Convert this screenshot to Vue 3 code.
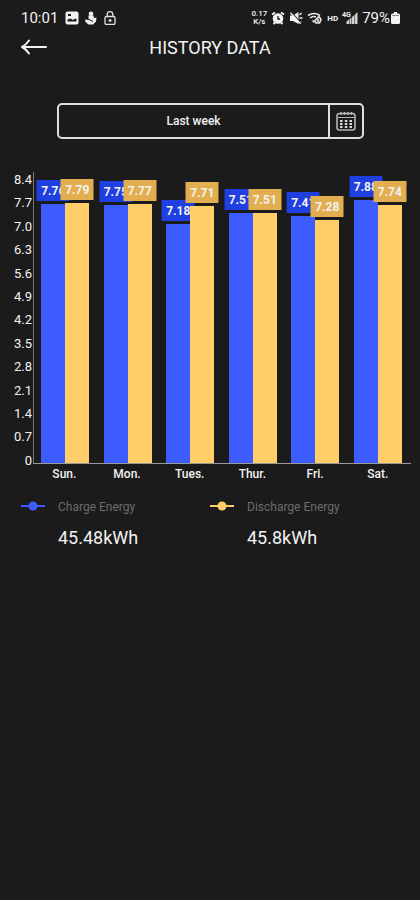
<template>
  <div class="page">
    <div class="status-bar">
      <div class="status-left">
        <span class="time">10:01</span>
        <svg class="icon" viewBox="0 0 14 14">
          <path fill="#f2f2f2" fill-rule="evenodd" d="M2.500.5h9a2 2 0 0 1 2 2v9a2 2 0 0 1-2 2h-9a2 2 0 0 1-2-2v-9a2 2 0 0 1 2-2zM2.500 10.500h9V8L10 7.500l-2 1.500-2.500-1.500-3 1zM3 3v2h3V3z" />
        </svg>
        <svg class="icon" viewBox="0 0 14 14">
          <circle cx="7" cy="2.800" r="2.300" fill="#f2f2f2" />
          <path d="M4.500 4.500h5L10 7l2.500-.5-.5 4-3 3H4.500L1.500 11 1 8.500 4.500 9z" fill="#f2f2f2" />
          <path d="M4 8l5 2.500" stroke="#1b1b1b" />
        </svg>
        <svg class="icon" viewBox="0 0 14 14" fill="none" stroke="#e2e2e2" stroke-width="1.300">
          <rect x="2" y="5.500" width="10" height="8" rx="1.500" />
          <path d="M4.200 5.500V3.500a2.800 2.800 0 0 1 5.600 0v2M7 8v3M5.500 9.500h3" />
        </svg>
      </div>
      <div class="status-right">
        <span class="speed"><span>0.17</span><span>K/s</span></span>
        <svg class="icon" viewBox="0 0 14 14">
          <path d="M1 3.500L4 1.500M13 3.500l-3-2M2.500 13l2-2M11.500 13l-2-2" stroke="#f2f2f2" stroke-width="2" />
          <circle cx="7" cy="7.500" r="5.300" fill="#f2f2f2" />
          <path d="M7 5v3h2" fill="none" stroke="#1b1b1b" stroke-width="1.300" />
        </svg>
        <svg class="icon" viewBox="0 0 14 14">
          <path d="M1 4.500h3L9.500 1v12L4 10H1z" fill="#f2f2f2" />
          <path d="M10.500 4l2-2M10.500 7h3M10.500 10l2 2" stroke="#f2f2f2" stroke-width="1.400" />
          <path d="M2.500 1.500l10 11" stroke="#1b1b1b" stroke-width="1.200" />
          <path d="M1.500 1.800l10 11" stroke="#f2f2f2" stroke-width="1.400" />
        </svg>
        <svg class="icon wide" viewBox="0 0 16 14" fill="none" stroke="#e8e8e8" stroke-width="1.600">
          <path d="M1 4.500q6-4 12 0M3 7q3-2.500 6-1M5.500 9.500l2 2" />
          <path d="M8 9.500l4-4 2 3-1.500 3.500H9zM11 8v3" />
        </svg>
        <span class="hd">HD</span>
        <svg class="icon wide signal" viewBox="0 0 16 14">
          <path d="M4.500 13v-2.500l2.500-2V13zM7.500 13V8l2-1.500V13zM10 13V6l2.500-2v9zM13 13V3.500L15.500 1v12z" fill="#d0d0d0" />
          <text x="0" y="6" font-size="7" font-weight="700" fill="#f2f2f2">4G</text>
        </svg>
        <span class="percent">79%</span>
        <svg class="battery" viewBox="0 0 9 14">
          <path d="M3 1h3v1.500h1.500q1.500 0 1.500 1.500v7.500Q9 13 7.500 13h-6Q0 13 0 11.500V4q0-1.500 1.500-1.500H3z" fill="#f2f2f2" />
          <path d="M1 4.500h7" stroke="#8a8a8a" />
        </svg>
      </div>
    </div>

    <header class="header">
      <button class="back" type="button" aria-label="Back">
        <svg viewBox="0 0 26 16" fill="none" stroke="#f2f2f2" stroke-width="2" stroke-linecap="round" stroke-linejoin="round">
          <path d="M25 8H1M8 1.500Q5 6 1 8q4 2 7 6.500" />
        </svg>
      </button>
      <h1>HISTORY DATA</h1>
    </header>

    <div class="picker">
      <button class="range" type="button">Last week</button>
      <button class="calendar" type="button" aria-label="Choose date">
        <svg viewBox="0 0 20 20" fill="none" stroke="#b4b4b4">
          <rect x="1" y="2.500" width="18" height="16.500" rx="2.500" stroke-width="1.600" />
          <path d="M1.500 6.500h17" />
          <path d="M5 1v3M8.500 1v3M12 1v3M15.500 1v3" stroke-width="1.600" />
          <path d="M4 10h2.500M8.800 10h2.500M13.500 10H16M4 13h2.500M8.800 13h2.500M13.500 13H16M4 16h2.500M8.800 16h2.500M13.500 16H16" stroke="#dcdcdc" stroke-width="1.800" />
        </svg>
      </button>
    </div>

    <div class="chart">
      <div class="y-axis">
        <span v-for="tick in ticks" :key="tick">{{ tick }}</span>
      </div>
      <div class="main">
        <div class="plot">
          <div v-for="d in days" :key="d.name" class="group">
            <div class="bar charge" :style="{ height: barHeight(d.charge) }">
              <span class="tag">{{ d.charge.toFixed(2) }}</span>
            </div>
            <div class="bar discharge" :style="{ height: barHeight(d.discharge) }">
              <span class="tag">{{ d.discharge.toFixed(2) }}</span>
            </div>
          </div>
        </div>
        <div class="x-axis">
          <span v-for="d in days" :key="d.name">{{ d.name }}</span>
        </div>
      </div>
    </div>

    <div class="legend">
      <div v-for="item in totals" :key="item.label" class="legend-item" :class="item.type">
        <svg class="marker" viewBox="0 0 24 10">
          <path d="M0 5h24" stroke="currentColor" stroke-width="2" />
          <circle cx="12" cy="5" r="4.500" fill="currentColor" />
        </svg>
        <div>
          <div class="label">{{ item.label }}</div>
          <div class="value">{{ item.value }}kWh</div>
        </div>
      </div>
    </div>
  </div>
</template>

<script setup>
import { ref } from 'vue'

const max = 8.4
const ticks = ['8.4', '7.7', '7.0', '6.3', '5.6', '4.9', '4.2', '3.5', '2.8', '2.1', '1.4', '0.7', '0']

const days = ref([
  { name: 'Sun.', charge: 7.76, discharge: 7.79 },
  { name: 'Mon.', charge: 7.75, discharge: 7.77 },
  { name: 'Tues.', charge: 7.18, discharge: 7.71 },
  { name: 'Thur.', charge: 7.51, discharge: 7.51 },
  { name: 'Fri.', charge: 7.41, discharge: 7.28 },
  { name: 'Sat.', charge: 7.88, discharge: 7.74 }
])

const totals = ref([
  { type: 'charge', label: 'Charge Energy', value: 45.48 },
  { type: 'discharge', label: 'Discharge Energy', value: 45.8 }
])

const barHeight = (value) => (value / max) * 100 + '%'
</script>

<style>
body {
  margin: 0;
  background: #1b1b1b;
}
</style>

<style scoped>
.page {
  min-height: 100vh;
  background: #1b1b1b;
  color: #f2f2f2;
  font-family: Roboto, sans-serif;
}
button {
  padding: 0;
  border: none;
  background: none;
  color: inherit;
  font: inherit;
  cursor: pointer;
}
svg {
  display: block;
}
.status-bar {
  display: flex;
  justify-content: space-between;
  align-items: center;
  height: 20px;
  padding: 8px 20px 0 21px;
  font-size: 15px;
}
.status-left {
  display: flex;
  align-items: center;
  gap: 5px;
}
.status-right {
  display: flex;
  align-items: center;
  gap: 4px;
}
.time {
  margin-right: 2px;
}
.icon {
  width: 14px;
  height: 14px;
}
.wide {
  width: 16px;
}
.speed {
  display: flex;
  flex-direction: column;
  align-items: center;
  font-size: 8px;
  font-weight: 500;
  line-height: 8px;
}
.hd {
  font-size: 8px;
  font-weight: 700;
}
.battery {
  width: 9px;
  height: 14px;
  margin-left: -3px;
}
.header {
  display: grid;
  grid-template-columns: 26px 1fr 26px;
  align-items: center;
  height: 38px;
  padding: 0 21px;
}
.back svg {
  width: 26px;
  height: 16px;
}
h1 {
  margin: 0;
  font-size: 18px;
  font-weight: 400;
  text-align: center;
}
.picker {
  display: flex;
  height: 32px;
  margin: 37px 56px 0 57px;
  border: 2px solid #dedede;
  border-radius: 5px;
}
.range {
  flex: 1;
  font-size: 12px;
  font-weight: 500;
}
.calendar {
  display: flex;
  justify-content: center;
  align-items: center;
  width: 34px;
  border-left: 2px solid #dedede;
}
.calendar svg {
  width: 20px;
  height: 20px;
}
.chart {
  display: flex;
  margin: 33px 9px 0 0;
}
.y-axis {
  display: flex;
  flex-direction: column;
  justify-content: space-between;
  width: 32px;
  height: 297px;
  margin-right: 1px;
  font-size: 13px;
  line-height: 16px;
  text-align: right;
}
.main {
  flex: 1;
}
.plot {
  display: flex;
  height: 280px;
  padding: 11px 2px 0 0;
  border-left: 1px solid #777;
  border-bottom: 1px solid #999;
}
.group {
  display: flex;
  flex: 1;
  justify-content: center;
  align-items: flex-end;
}
.bar {
  position: relative;
  width: 24px;
}
.bar.charge {
  background: #3d5cff;
}
.bar.discharge {
  background: #ffce69;
}
.tag {
  position: absolute;
  bottom: 100%;
  left: 50%;
  width: 33px;
  margin-bottom: 3px;
  padding-top: 2px;
  transform: translateX(-50%);
  font-size: 12px;
  font-weight: 700;
  line-height: 19px;
  text-align: center;
}
.charge .tag {
  background: #1f3fe0;
}
.discharge .tag {
  background: #e3ae50;
}
.x-axis {
  display: flex;
  padding: 2px 2px 0 0;
  font-size: 12px;
  font-weight: 500;
  line-height: 16px;
}
.x-axis span {
  flex: 1;
  text-align: center;
}
.legend {
  display: grid;
  grid-template-columns: 1fr 1fr;
  margin: 16px 21px 0;
}
.legend-item {
  display: flex;
  gap: 13px;
}
.legend-item.charge {
  color: #3d5cff;
}
.legend-item.discharge {
  color: #ffce69;
}
.marker {
  width: 24px;
  height: 10px;
  margin-top: 3px;
}
.label {
  color: #6c6c6c;
  font-size: 12px;
  line-height: 18px;
}
.value {
  margin-top: 10px;
  color: #f2f2f2;
  font-size: 18px;
  line-height: 24px;
}
</style>
